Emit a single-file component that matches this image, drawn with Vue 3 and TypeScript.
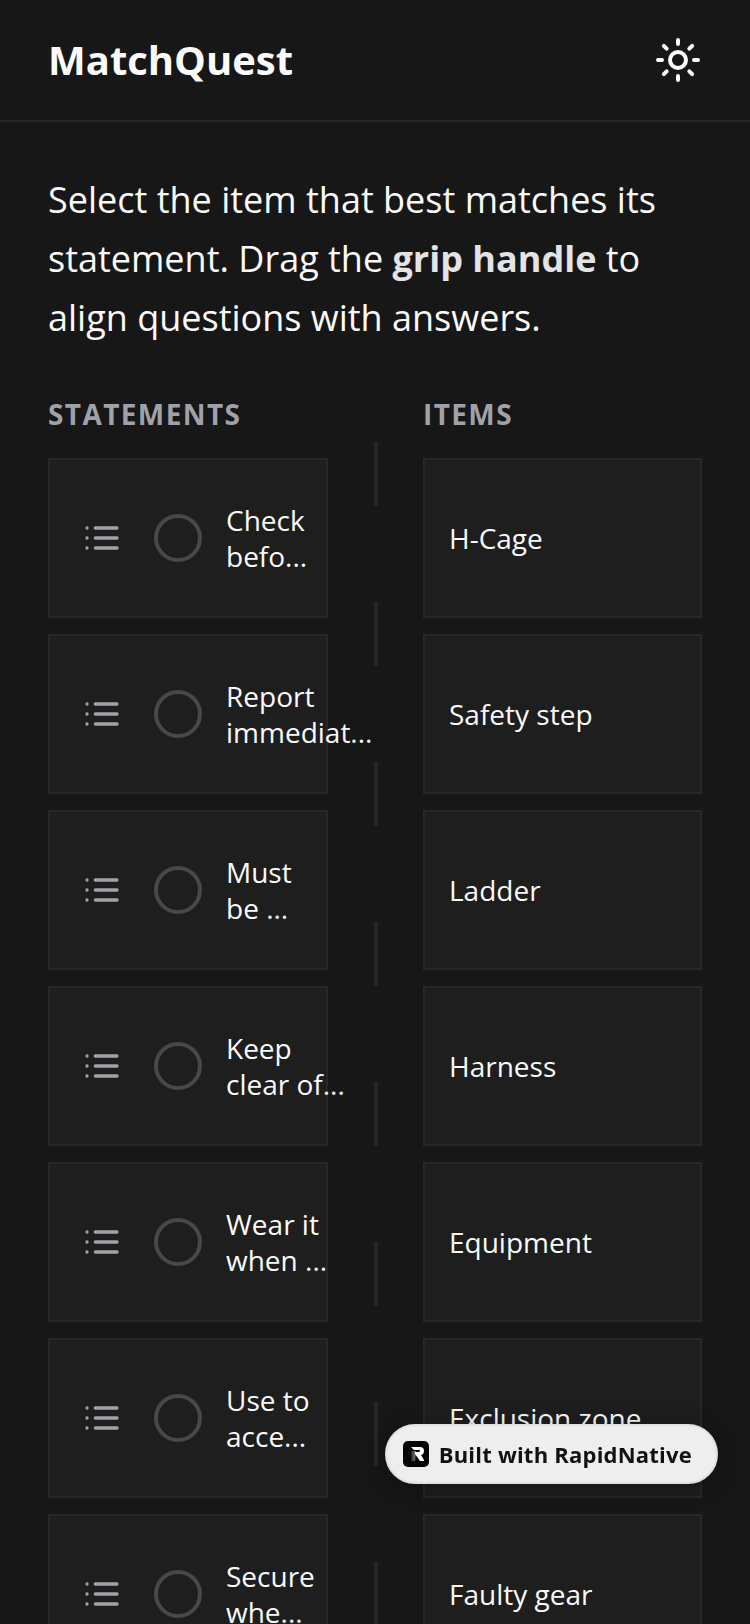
<script setup lang="ts">
import { ref } from 'vue'

interface Statement {
  id: number
  lines: string
}

const statements: Statement[] = [
  { id: 1, lines: 'Check\nbefo...' },
  { id: 2, lines: 'Report\nimmediat...' },
  { id: 3, lines: 'Must\nbe ...' },
  { id: 4, lines: 'Keep\nclear of...' },
  { id: 5, lines: 'Wear it\nwhen ...' },
  { id: 6, lines: 'Use to\nacce...' },
  { id: 7, lines: 'Secure\nwhe...' },
]

const items: string[] = [
  'H-Cage',
  'Safety step',
  'Ladder',
  'Harness',
  'Equipment',
  'Exclusion zone',
  'Faulty gear',
]

const dashCount = 8
const selected = ref<number | null>(null)
</script>

<template>
  <div class="app">
    <header class="header">
      <h1 class="title">MatchQuest</h1>
      <button class="theme" type="button" aria-label="Toggle theme">
        <svg class="sun" viewBox="0 0 24 24" aria-hidden="true">
          <circle cx="12" cy="12" r="4" />
          <path d="M12 2v2M12 20v2M4.93 4.93l1.41 1.41M17.66 17.66l1.41 1.41M2 12h2M20 12h2M6.34 17.66l-1.41 1.41M19.07 4.93l-1.41 1.41" />
        </svg>
      </button>
    </header>

    <main class="content">
      <p class="intro">
        Select the item that best matches its statement. Drag the
        <strong>grip handle</strong> to align questions with answers.
      </p>

      <div class="board">
        <section class="column">
          <h2 class="heading">STATEMENTS</h2>
          <ul class="list">
            <li v-for="s in statements" :key="s.id" class="card">
              <button class="grip" type="button" :aria-label="'Drag statement ' + s.id">
                <svg class="grip-icon" viewBox="0 0 24 24" aria-hidden="true">
                  <path d="M3 6h.01M3 12h.01M3 18h.01M8 6h13M8 12h13M8 18h13" />
                </svg>
              </button>
              <input :id="'statement-' + s.id" v-model="selected" class="radio" type="radio" name="statement" :value="s.id" />
              <label class="text" :for="'statement-' + s.id">{{ s.lines }}</label>
            </li>
          </ul>
        </section>

        <div class="rail" aria-hidden="true">
          <span v-for="n in dashCount" :key="n" class="dash"></span>
        </div>

        <section class="column">
          <h2 class="heading">ITEMS</h2>
          <ul class="list">
            <li v-for="item in items" :key="item">
              <button class="card item" type="button">{{ item }}</button>
            </li>
          </ul>
        </section>
      </div>
    </main>

    <a class="badge" href="#">
      <svg class="logo" viewBox="0 0 26 26" aria-hidden="true">
        <defs>
          <linearGradient id="stem" x1="0" y1="0" x2="1" y2="0">
            <stop offset="0" stop-color="#222" />
            <stop offset="1" stop-color="#888" />
          </linearGradient>
        </defs>
        <rect width="26" height="26" rx="5" fill="#050505" />
        <path d="M8 10h5l-1 10H8z" fill="url(#stem)" />
        <path d="M8 6h9q4 0 4 4 0 3-3 4l3 5v1h-4l-5-7v-2h4q1 0 1-1t-1-1h-5z" fill="#fff" />
      </svg>
      <span>Built with RapidNative</span>
    </a>
  </div>
</template>

<style>
body {
  background: #171717;
}
</style>

<style scoped>
.app {
  display: flex;
  flex-direction: column;
  height: 100vh;
  overflow: hidden;
  background: #171717;
  color: #fafafa;
  font-family: "Open Sans", "Noto Sans", sans-serif;
}

button {
  margin: 0;
  padding: 0;
  border: 0;
  background: none;
  color: inherit;
  font: inherit;
  cursor: pointer;
}

.header {
  display: flex;
  flex: none;
  align-items: center;
  justify-content: space-between;
  padding: 32px 48px;
  border-bottom: 2px solid #272727;
}

.title {
  margin: 0;
  font-size: 40px;
  font-weight: 700;
  line-height: 56px;
}

.theme {
  display: flex;
}

.sun {
  width: 48px;
  height: 48px;
}

.sun,
.grip-icon {
  fill: none;
  stroke: currentColor;
  stroke-width: 2;
  stroke-linecap: round;
  stroke-linejoin: round;
}

.content {
  flex: 1;
  min-height: 0;
  padding: 48px;
  overflow-y: auto;
  scrollbar-width: none;
}

.intro {
  margin: 0 0 47px;
  font-size: 36px;
  line-height: 59px;
}

.intro strong {
  color: #e4e4e7;
  font-weight: 700;
}

.board {
  display: grid;
  grid-template-columns: calc(50% - 47px) 95px 1fr;
}

.column {
  min-width: 0;
}

.heading {
  margin: 0 0 24px;
  color: #a1a1aa;
  font-size: 28px;
  font-weight: 700;
  line-height: 40px;
  letter-spacing: 0.05em;
}

.list {
  display: grid;
  grid-template-columns: minmax(0, 1fr);
  gap: 16px;
  margin: 0;
  padding: 0;
  list-style: none;
}

.card {
  display: flex;
  align-items: center;
  box-sizing: border-box;
  width: 100%;
  height: 160px;
  padding: 0 24px;
  border: 2px solid #272727;
  background: #1e1e1e;
  font-size: 28px;
  line-height: 36px;
}

.item {
  text-align: left;
}

.grip {
  display: flex;
  flex: none;
  margin-right: 24px;
  padding: 8px;
  color: #a1a1aa;
}

.grip-icon {
  width: 40px;
  height: 40px;
}

.radio {
  flex: none;
  appearance: none;
  width: 48px;
  height: 48px;
  margin: 0 24px 0 0;
  border: 4px solid #484848;
  border-radius: 50%;
}

.radio:checked {
  border-color: #fafafa;
}

.text {
  flex: 1;
  min-width: 0;
  white-space: pre;
}

.rail {
  display: flex;
  flex-direction: column;
  align-items: center;
  gap: 96px;
  padding-top: 48px;
}

.dash {
  width: 4px;
  height: 64px;
  background: #272727;
}

.badge {
  position: fixed;
  right: 32px;
  bottom: 140px;
  display: flex;
  align-items: center;
  gap: 10px;
  box-sizing: border-box;
  height: 60px;
  padding: 0 24px 0 16px;
  border: 2px solid #e0e0e0;
  border-radius: 30px;
  background: #eee;
  box-shadow: 0 4px 24px rgba(0, 0, 0, 0.3);
  color: #111;
  font-size: 22px;
  font-weight: 700;
  line-height: 32px;
  letter-spacing: 0.01em;
  text-decoration: none;
}

.logo {
  width: 26px;
  height: 26px;
}
</style>
